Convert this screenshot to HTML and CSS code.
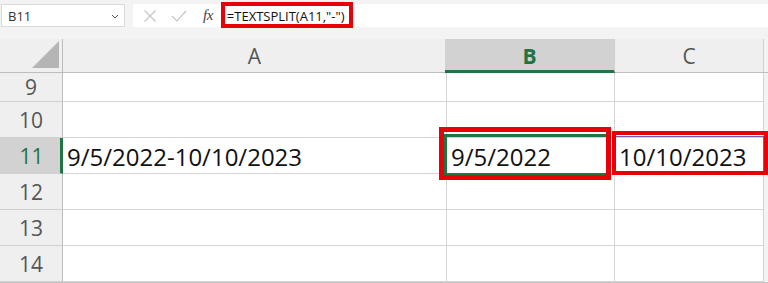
FILE: index.html
```html
<!DOCTYPE html>
<html>
<head>
<meta charset="utf-8">
<link rel="stylesheet" href="styles.css">
</head>
<body>
<div class="stage">
  <div class="toolbar">
    <div class="namebox"><span class="ref">B11</span><svg class="chev" width="8" height="5" viewBox="0 0 8 5"><path d="M1 1 L4 4 L7 1" fill="none" stroke="#555" stroke-width="1"/></svg></div>
    <div class="fbar">
      <svg class="ic" width="14" height="12" viewBox="0 0 14 12"><path d="M1.5 0.5 L12.5 11.5 M12.5 0.5 L1.5 11.5" stroke="#c6c6c6" stroke-width="1.2" fill="none"/></svg>
      <svg class="ic ok" width="16" height="12" viewBox="0 0 16 12"><path d="M1 6 L6 11 L15 1" stroke="#c6c6c6" stroke-width="1.2" fill="none"/></svg>
      <span class="fx">fx</span>
      <span class="formula">=TEXTSPLIT(A11,"-")</span>
    </div>
  </div>
  <div class="grid">
    <div class="corner"><svg width="27" height="27" viewBox="0 0 27 27"><path d="M27 0 L27 27 L0 27 Z" fill="#b5b5b5"/></svg></div>
    <div class="ch">A</div>
    <div class="ch sel">B</div>
    <div class="ch">C</div>
    <div class="ch end"></div>

    <div class="rh">9</div><div class="c"></div><div class="c"></div><div class="c"></div><div class="c end"></div>
    <div class="rh">10</div><div class="c"></div><div class="c"></div><div class="c"></div><div class="c end"></div>
    <div class="rh active">11</div><div class="c val">9/5/2022-10/10/2023</div><div class="c val">9/5/2022</div><div class="c val">10/10/2023</div><div class="c end"></div>
    <div class="rh">12</div><div class="c"></div><div class="c"></div><div class="c"></div><div class="c end"></div>
    <div class="rh">13</div><div class="c"></div><div class="c"></div><div class="c"></div><div class="c end"></div>
    <div class="rh">14</div><div class="c"></div><div class="c"></div><div class="c"></div><div class="c end"></div>
  </div>
  <div class="selbox"></div>
  <div class="spill"></div>
  <div class="mark m-formula"></div>
  <div class="mark m-b"></div>
  <div class="mark m-c"></div>
</div>
</body>
</html>
```

FILE: styles.css
```css
* { box-sizing: border-box; }
html, body { margin: 0; padding: 0; }
body {
  width: 768px;
  height: 283px;
  overflow: hidden;
  background: #f3f3f3;
  font-family: "Open Sans", "Noto Sans", sans-serif;
}
.stage { position: relative; width: 768px; height: 283px; }

.toolbar {
  height: 39px;
  padding: 4px 0 0 1px;
  display: flex;
  align-items: flex-start;
  gap: 8px;
  background: #f3f3f3;
}
.namebox {
  width: 124px;
  height: 23px;
  background: #fff;
  border: 1px solid #dadada;
  display: flex;
  align-items: center;
  justify-content: space-between;
  padding: 0 5px 0 6px;
}
.ref { font-size: 13px; color: #333; }
.chev { margin-top: 1px; }
.fbar {
  flex: 1;
  height: 23px;
  background: #fff;
  display: flex;
  align-items: center;
  padding-left: 10px;
}
.ic { margin-right: 14px; }
.ic.ok { margin-right: 16px; }
.fx {
  font-family: "Liberation Serif", serif;
  font-style: italic;
  font-size: 15px;
  color: #444;
  margin-right: 14px;
  letter-spacing: -0.5px;
}
.formula { font-size: 13px; color: #111; }

.grid {
  display: grid;
  grid-template-columns: 63px 384px 168px 149px 1fr;
  grid-template-rows: 34px 29px 36px 36px 36px 36px 36px;
  background: #fff;
  border-bottom: 2px solid #c4c4c4;
}
.corner {
  background: #efefef;
  border-right: 1px solid #bdbdbd;
  border-bottom: 1px solid #bdbdbd;
  display: flex;
  justify-content: flex-end;
  align-items: flex-end;
  padding: 0 3px 4px 0;
}
.ch {
  background: #efefef;
  border-right: 1px solid #d0d0d0;
  border-bottom: 1px solid #bdbdbd;
  display: flex;
  align-items: center;
  justify-content: center;
  font-size: 21px;
  color: #555;
}
.ch.sel {
  background: #d2d2d2;
  color: #217346;
  font-weight: 700;
  border-bottom: 3px solid #217346;
  margin-left: -2px;
  padding-top: 2px;
}
.ch.end { background: #f3f3f3; border-right: none; }
.rh {
  background: #efefef;
  border-right: 1px solid #bdbdbd;
  border-bottom: 1px solid #d0d0d0;
  display: flex;
  align-items: center;
  justify-content: center;
  font-size: 21px;
  color: #555;
}
.rh.active {
  background: #d2d2d2;
  color: #217346;
  border-right: 3px solid #217346;
  padding-left: 3px;
}
.c {
  border-right: 1px solid #d4d4d4;
  border-bottom: 1px solid #d4d4d4;
  display: flex;
  align-items: center;
}
.c.end { background: #f3f3f3; border-right: none; border-bottom: none; }
.val {
  font-size: 24px;
  color: #111;
  padding-left: 4px;
  padding-top: 1px;
}

.selbox {
  position: absolute;
  left: 444px;
  top: 134px;
  width: 167px;
  height: 42px;
  border: 3px solid #217346;
}
.spill {
  position: absolute;
  left: 614px;
  top: 136px;
  width: 150px;
  height: 38px;
  border: 1px solid #6b5fb3;
}
.mark {
  position: absolute;
  border: 4px solid #e8000b;
}
.m-formula { left: 221px; top: 2px; width: 132px; height: 26px; }
.m-b { left: 439px; top: 127px; width: 172px; height: 53px; border-width: 5px; }
.m-c { left: 612px; top: 131px; width: 156px; height: 44px; border-width: 4px; }
```
